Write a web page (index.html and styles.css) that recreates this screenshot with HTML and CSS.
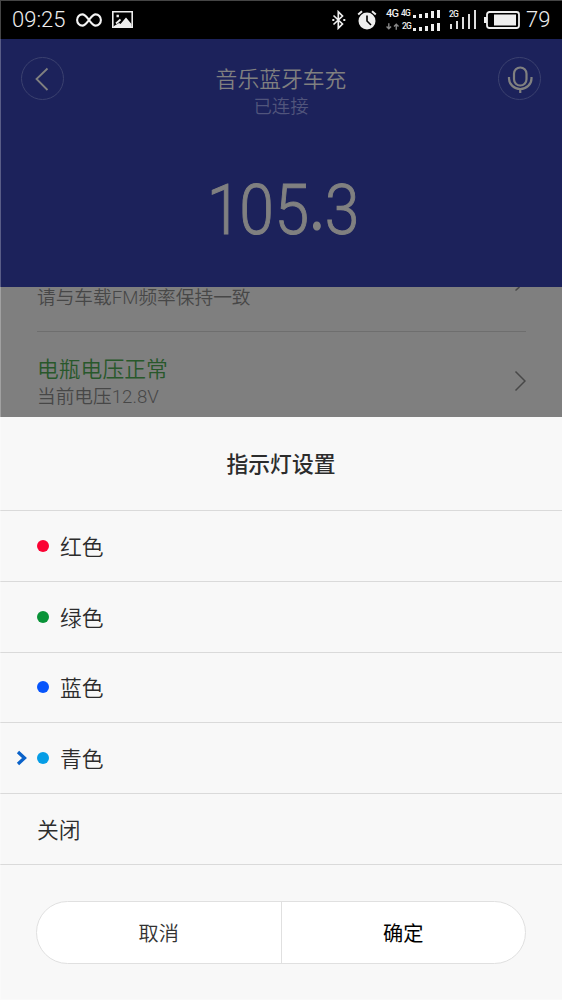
FILE: index.html
```html
<!DOCTYPE html>
<html lang="zh-CN">
<head>
<meta charset="utf-8">
<title>指示灯设置</title>
<link rel="stylesheet" href="styles.css">
</head>
<body>
<div class="phone">
  <div class="status">
    <span class="time">09:25</span>
    <svg class="infinity" width="26" height="14" viewBox="0 0 26 14" fill="none" stroke="#f4f4f4" stroke-width="2.1"><path d="M13 7C10.500 3.800 9 1.400 6.400 1.400a5.300 5.600 0 0 0 0 11.200C9 12.600 10.500 10.200 13 7s4-5.600 6.600-5.600a5.300 5.600 0 0 1 0 11.200C17 12.600 15.500 10.200 13 7z"/></svg>
    <svg class="photo" width="21" height="17" viewBox="0 0 21 17"><path fill="none" stroke="#eee" stroke-width="1.600" d="M.8.800h19.400v15.400H.8z"/><path fill="#eee" d="M2 15l5-3 1.500 1L14 6.500l5.500 6.500v3H2zM4.500 3.800h2.400v2.400H4.500z"/><path stroke="#eee" stroke-width="1.800" d="M4 12.500l4.500-4"/></svg>
    <svg class="bluetooth" width="14" height="20" viewBox="0 0 14 20" fill="none" stroke="#eee" stroke-width="1.700"><path d="M1.500 5.500L10.500 14 6.300 18.200V1.800L10.500 6 1.500 14.500"/><path d="M.3 10h2M11.300 10h2" stroke-width="2"/></svg>
    <svg class="alarm" width="20" height="20" viewBox="0 0 20 20"><circle cx="10" cy="11" r="8.500" fill="#eee"/><path d="M1.200 4.500L5 1.300M15 1.300l3.800 3.200" stroke="#eee" stroke-width="2"/><path d="M10 5.500V11l4 4" fill="none" stroke="#000" stroke-width="1.600"/></svg>
    <div class="network">
      <div class="net-row"><b class="big">4G</b><b>4G</b><i class="bars"><i class="b3"></i><i class="b4"></i><i class="b5"></i><i class="b7"></i><i class="b8"></i></i></div>
      <div class="net-row"><svg width="14" height="7" viewBox="0 0 15 7" fill="none" stroke="#888" stroke-width="1.500"><path d="M3 0v6M.6 3.500L3 6l2.400-2.500M11 7V1M8.600 3.500L11 1l2.400 2.500"/></svg><b>2G</b><i class="bars"><i class="b3"></i><i class="b4"></i><i class="b5"></i><i class="b7"></i><i class="b8"></i></i></div>
    </div>
    <div class="signal"><b>2G</b><svg width="27" height="19" viewBox="0 0 27 19" fill="#ddd"><path d="M1 14h2v5H1zM7 11h2v8H7zM13 7h2v12h-2zM19 4h2v15h-2zM25 0h2v19h-2z"/></svg></div>
    <svg class="battery" width="36" height="18" viewBox="0 0 36 18"><rect x="3" y="1" width="32" height="16" rx="2.500" fill="none" stroke="#eee" stroke-width="1.800"/><path fill="#eee" d="M0 6h3v6H0zM10 3.500h22v11H10z"/></svg>
    <span class="percent">79</span>
  </div>
  <header class="header">
    <div class="bar">
      <span class="round"><svg width="42" height="42" viewBox="0 0 42 42" fill="none" stroke="#808080" stroke-width="1.800"><path d="M25.500 10.500L14.500 21l11 11"/></svg></span>
      <div class="titles"><h1>音乐蓝牙车充</h1><p>已连接</p></div>
      <span class="round"><svg width="42" height="42" viewBox="0 0 42 42" fill="none" stroke="#808080" stroke-width="2.200"><rect x="15" y="9.500" width="12.500" height="18" rx="6.250"/><path d="M10 19v1.500a11.250 10.500 0 0 0 22.500 0V19M21.250 31v4"/></svg></span>
    </div>
    <div class="frequency"><span class="d1">1</span><span class="d0">0</span><span class="d5">5</span><span class="dot">.</span><span class="d3">3</span></div>
  </header>
  <main class="content">
    <div class="hint"><span>请与车载FM频率保持一致</span><svg width="12" height="6" viewBox="0 0 12 6" fill="none" stroke="#484848" stroke-width="1.600"><path d="M5.500 0L1.500 3.500"/></svg></div>
    <div class="voltage">
      <div><p class="ok">电瓶电压正常</p><p class="now">当前电压12.8V</p></div>
      <svg width="14" height="22" viewBox="0 0 14 22" fill="none" stroke="#484848" stroke-width="1.500"><path d="M3.500 1.500L13 11 3.500 20.500"/></svg>
    </div>
  </main>
  <section class="sheet">
    <h2>指示灯设置</h2>
    <ul class="options">
      <li><span class="mark"></span><span class="color red"></span><span class="label">红色</span></li>
      <li><span class="mark"></span><span class="color green"></span><span class="label">绿色</span></li>
      <li><span class="mark"></span><span class="color blue"></span><span class="label">蓝色</span></li>
      <li><span class="mark"><svg width="12" height="16" viewBox="0 0 12 16" fill="none" stroke="#0a62c9" stroke-width="3.300"><path d="M2 2l6.500 6L2 14"/></svg></span><span class="color cyan"></span><span class="label">青色</span></li>
      <li><span class="mark"></span><span class="label">关闭</span></li>
    </ul>
    <div class="actions"><button class="cancel">取消</button><button class="confirm">确定</button></div>
  </section>
</div>
</body>
</html>
```
FILE: styles.css
```css
* { box-sizing: border-box; margin: 0; padding: 0; }
body { font-family: Roboto, "Noto Sans CJK SC", sans-serif; font-weight: 350; background: #f8f8f8; }
.phone { position: relative; width: 562px; height: 1000px; display: flex; flex-direction: column; overflow: hidden; }
.phone::after { content: ""; position: absolute; inset: 0; border: solid rgba(255, 255, 255, .27); border-width: 1px 0 1px 1px; pointer-events: none; }
svg { display: block; flex: none; }

.status { height: 39px; flex: none; background: #000; color: #eee; display: flex; align-items: center; padding-left: 12px; font-weight: 300; }
.time { width: 64px; font-size: 22px; line-height: 38px; white-space: nowrap; }
.photo { margin-left: 10px; }
.bluetooth { margin-left: 199px; }
.alarm { margin-left: 11px; }
.network { margin-left: 9px; width: 54px; display: flex; flex-direction: column; gap: 3px; padding-top: 1px; }
.net-row { height: 10px; display: flex; align-items: center; justify-content: space-between; }
.net-row b, .signal b { font-size: 8.500px; line-height: 9px; font-weight: 500; letter-spacing: -.8px; }
.net-row b.big { font-size: 11px; line-height: 10px; }
.bars { display: flex; align-items: flex-end; gap: 3px; height: 8px; }
.bars i { width: 3px; background: #eee; }
.b3 { height: 3px; }
.b4 { height: 4px; }
.b5 { height: 5px; }
.b7 { height: 7px; }
.b8 { height: 8px; }
.signal { position: relative; margin-left: 9px; }
.signal b { position: absolute; left: 0; top: 0; }
.battery { margin-left: 8px; }
.percent { margin-left: 6px; font-size: 22px; }

.header { height: 248px; flex: none; background: #1c225b; color: #808080; }
.bar { display: flex; justify-content: space-between; padding: 18px 21px 0 21px; }
.round { width: 43px; height: 43px; border: 1px solid #3b416f; border-radius: 50%; }
.titles { text-align: center; padding-top: 7px; }
.titles h1 { font-size: 21.800px; line-height: 31px; font-weight: inherit; }
.titles p { font-size: 18.400px; line-height: 24px; color: #51557c; }
.frequency { display: flex; width: 168px; height: 84px; margin: 49px 0 0 210px; font-size: 71px; line-height: 84px; font-weight: 300; transform: scaleX(.88); transform-origin: left; -webkit-text-stroke: 1px #808080; }
.frequency span { display: block; text-align: center; flex: none; }
.d1 { width: 40px; margin-left: -4px; }
.d0 { width: 40px; margin-left: -3px; }
.d5 { width: 40px; }
.frequency .dot { width: 17px; font-family: Lato, sans-serif; font-weight: 400; -webkit-text-stroke: 0; margin-top: -7px; }
.d3 { width: 40px; }

.content { height: 130px; flex: none; background: #7f7f7f; padding: 0 36px 0 37px; overflow: hidden; }
.hint { height: 45px; border-bottom: 1px solid #6e6e6e; display: flex; justify-content: space-between; color: #474747; font-size: 18.700px; line-height: 22px; }
.voltage { display: flex; justify-content: space-between; align-items: center; height: 98px; color: #474747; }
.ok { font-size: 21.800px; line-height: 30px; color: #28582b; padding-top: 3px; }
.now { font-size: 18.700px; line-height: 25px; }

.sheet { flex: 1; background: #f8f8f8; color: #2c2c2c; }
.sheet h2 { height: 94px; line-height: 95px; text-align: center; font-size: 21.800px; font-weight: 500; border-bottom: 1px solid #dadada; }
.options { list-style: none; }
.options li { height: 70.800px; display: flex; align-items: center; font-size: 21.800px; border-bottom: 1px solid #dadada; }
.mark { width: 37px; padding-left: 16px; }
.label { padding-bottom: 1px; }
.color { width: 12px; height: 12px; border-radius: 50%; margin-right: 11px; }
.red { background: #fb0233; }
.green { background: #099338; }
.blue { background: #0755fb; }
.cyan { background: #059de6; }
.actions { display: flex; width: 490px; height: 63px; margin: 36px 0 0 36px; border: 1px solid #e0e0e0; border-radius: 32px; background: #fff; overflow: hidden; }
.actions button { flex: 1; border: 0; background: none; font: inherit; font-size: 20.200px; color: #333; }
.actions .confirm { border-left: 1px solid #e0e0e0; color: #000; font-weight: 400; }
```
